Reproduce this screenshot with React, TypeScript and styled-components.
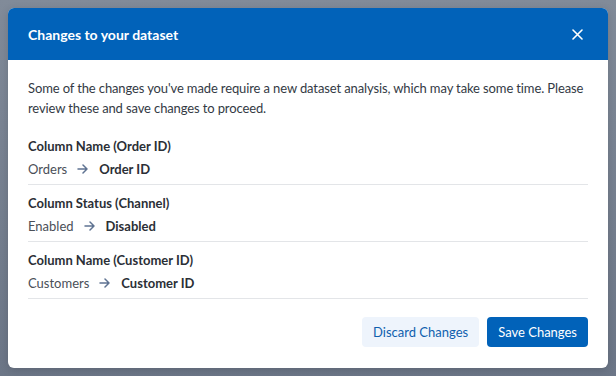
import React from "react";
import styled, { createGlobalStyle } from "styled-components";

const Global = createGlobalStyle`
  html, body { margin: 0; padding: 0; }
  body {
    width: 616px;
    height: 376px;
    overflow: hidden;
    font-family: Lato, "Open Sans", sans-serif;
    background: linear-gradient(180deg, #818b99 0%, #6c7687 100%);
  }
`;

const Backdrop = styled.div`
  box-sizing: border-box;
  width: 616px;
  height: 376px;
  padding: 8px;
`;

const Dialog = styled.div`
  width: 600px;
  height: 360px;
  background: #ffffff;
  border-radius: 6px;
  overflow: hidden;
  display: flex;
  flex-direction: column;
  box-shadow: 0 2px 8px rgba(0, 0, 0, 0.15);
`;

const Header = styled.div`
  height: 52px;
  flex: none;
  background: #0162b9;
  display: flex;
  align-items: center;
  justify-content: space-between;
  padding: 0 20px;
`;

const Title = styled.h2`
  margin: 0;
  font-size: 14px;
  font-weight: 700;
  color: #ffffff;
`;

const CloseButton = styled.button`
  border: 0;
  background: transparent;
  padding: 0;
  margin-right: 3px;
  width: 16px;
  height: 16px;
  display: flex;
  align-items: center;
  justify-content: center;
  color: #ffffff;
  cursor: pointer;
`;

const Body = styled.div`
  padding: 18px 20px 0;
  flex: 1;
`;

const Intro = styled.p`
  margin: 0 0 10px;
  font-size: 13px;
  line-height: 20px;
  letter-spacing: -0.12px;
  color: #333a44;
`;

const Change = styled.div`
  padding: 8px 0 5px;
  border-bottom: 1px solid #e3e5e8;
`;

const ChangeTitle = styled.div`
  font-size: 13px;
  line-height: 20px;
  font-weight: 700;
  color: #2b2f36;
`;

const ChangeValues = styled.div`
  margin-top: 3px;
  display: flex;
  align-items: center;
  font-size: 13px;
  line-height: 20px;
`;

const OldValue = styled.span`
  color: #4a4f57;
`;

const Arrow = styled.span`
  display: inline-flex;
  margin: 0 11px 0 10px;
  color: #5f7392;
`;

const NewValue = styled.span`
  font-weight: 700;
  color: #2b2f36;
`;

const Footer = styled.div`
  display: flex;
  justify-content: flex-end;
  gap: 8px;
  padding: 0 20px 21px;
`;

const Button = styled.button<{ $primary?: boolean }>`
  height: 30px;
  padding: 0 11px;
  border: 0;
  border-radius: 4px;
  font-family: Lato, "Open Sans", sans-serif;
  font-size: 13px;
  background: ${(p) => (p.$primary ? "#0162b9" : "#eef4fc")};
  color: ${(p) => (p.$primary ? "#ffffff" : "#0f5fae")};
  cursor: pointer;
`;

const changes = [
  { title: "Column Name (Order ID)", from: "Orders", to: "Order ID" },
  { title: "Column Status (Channel)", from: "Enabled", to: "Disabled" },
  { title: "Column Name (Customer ID)", from: "Customers", to: "Customer ID" },
];

const ArrowIcon = () => (
  <svg width="11" height="10" viewBox="0 0 11 10" fill="none" stroke="currentColor" strokeWidth="1.5" strokeLinecap="round" strokeLinejoin="round">
    <path d="M1 5h9M6 1l4 4-4 4" />
  </svg>
);

export default function App() {
  return (
    <>
      <Global />
      <Backdrop>
        <Dialog>
          <Header>
            <Title>Changes to your dataset</Title>
            <CloseButton aria-label="Close">
              <svg width="11" height="11" viewBox="0 0 11 11" stroke="currentColor" strokeWidth="1.6" strokeLinecap="round">
                <path d="M1 1l9 9M10 1l-9 9" />
              </svg>
            </CloseButton>
          </Header>
          <Body>
            <Intro>
              Some of the changes you've made require a new dataset analysis, which may take some time. Please review these and save changes to proceed.
            </Intro>
            {changes.map((c) => (
              <Change key={c.title}>
                <ChangeTitle>{c.title}</ChangeTitle>
                <ChangeValues>
                  <OldValue>{c.from}</OldValue>
                  <Arrow>
                    <ArrowIcon />
                  </Arrow>
                  <NewValue>{c.to}</NewValue>
                </ChangeValues>
              </Change>
            ))}
          </Body>
          <Footer>
            <Button>Discard Changes</Button>
            <Button $primary>Save Changes</Button>
          </Footer>
        </Dialog>
      </Backdrop>
    </>
  );
}
